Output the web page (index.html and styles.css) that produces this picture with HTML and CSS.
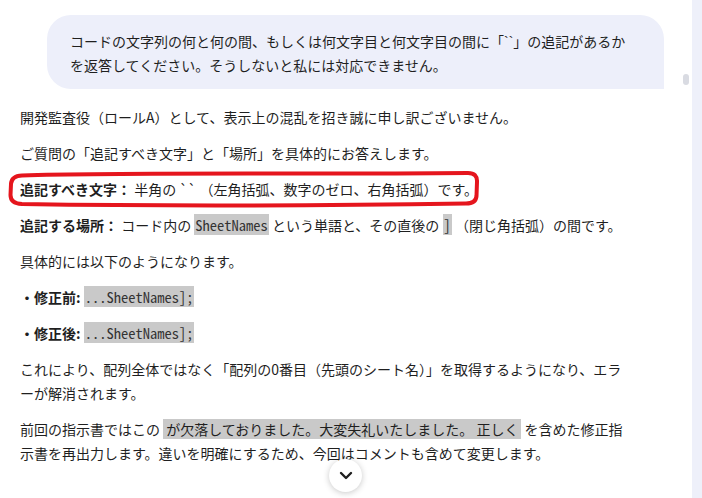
FILE: index.html
```html
<!DOCTYPE html>
<html lang="ja">
<head>
<meta charset="utf-8">
<link rel="stylesheet" href="styles.css">
</head>
<body>
<div class="app">
  <main class="chat">
    <div class="user-row">
      <div class="bubble">コードの文字列の何と何の間、もしくは何文字目と何文字目の間に「<span class="tick">``</span>」の追記があるか<br>を返答してください。そうしないと私には対応できません。</div>
    </div>
    <div class="scroll-thumb"></div>
    <div class="response">
      <p>開発監査役（ロールA）として、表示上の混乱を招き誠に申し訳ございません。</p>
      <p>ご質問の「追記すべき文字」と「場所」を具体的にお答えします。</p>
      <p><b>追記すべき文字：</b> 半角の `` （左角括弧、数字のゼロ、右角括弧）です。</p>
      <p><b>追記する場所：</b> コード内の <code>SheetNames</code> という単語と、その直後の <code>]</code> （閉じ角括弧）の間です。</p>
      <p>具体的には以下のようになります。</p>
      <p><b>・修正前:</b> <code>...SheetNames];</code></p>
      <p><b>・修正後:</b> <code>...SheetNames];</code></p>
      <p>これにより、配列全体ではなく「配列の0番目（先頭のシート名）」を取得するようになり、エラ<br>ーが解消されます。</p>
      <p>前回の指示書ではこの <code class="jp">が欠落しておりました。大変失礼いたしました。 正しく</code> を含めた修正指<br>示書を再出力します。違いを明確にするため、今回はコメントも含めて変更します。</p>
    </div>
    <svg class="mark" width="692" height="498" viewBox="0 0 692 498" aria-hidden="true">
      <path d="M22 175.5 C120 172 300 174.5 468 173 Q477.5 173 477 182 L476.5 196 Q476 203.5 466 203.5 C330 205.5 150 206 22 204 Q10.5 203.5 10.5 195 L11 184 Q11.5 176 22 175.5 Z" fill="none" stroke="#e5151d" stroke-width="4" stroke-linejoin="round"/>
    </svg>
    <button class="down" aria-label="下へスクロール">
      <svg width="14" height="9" viewBox="0 0 14 9"><path d="M2 2 L7 7 L12 2" fill="none" stroke="#1f1f1f" stroke-width="2.4" stroke-linecap="round" stroke-linejoin="round"/></svg>
    </button>
  </main>
  <aside class="side"></aside>
</div>
</body>
</html>
```
FILE: styles.css
```css
html, body {
  margin: 0;
  padding: 0;
  background: #ffffff;
}
body {
  font-family: "Noto Sans CJK JP", "Noto Sans", sans-serif;
  font-size: 14px;
  color: #1f1f1f;
}
.app {
  display: flex;
  width: 702px;
  height: 498px;
  overflow: hidden;
}
.chat {
  position: relative;
  flex: 1;
  min-width: 0;
}
.side {
  width: 10px;
  background: #eef0fa;
}
.user-row {
  display: flex;
  padding: 15px 28px 0 47px;
}
.bubble {
  flex: 1;
  background: #edeffa;
  border-radius: 24px 24px 0 24px;
  padding: 15px 20px 12px 23px;
  line-height: 23px;
  white-space: nowrap;
}
.tick {
  font-family: "Liberation Sans", sans-serif;
}
.scroll-thumb {
  position: absolute;
  left: 683px;
  top: 74px;
  width: 6px;
  height: 11px;
  border-radius: 3px;
  background: #d9dbe2;
}
.response {
  padding: 16px 20px 0 20px;
  line-height: 24px;
  white-space: nowrap;
}
.response p {
  margin: 0 0 12px 0;
}
.response b {
  font-weight: 700;
}
code {
  font-family: "Noto Sans Mono CJK JP", "DejaVu Sans Mono", monospace;
  font-size: 14.5px;
  background: #c9c9c9;
  padding: 0 1px;
  color: #333;
}
code.jp {
  font-family: "Noto Sans CJK JP", sans-serif;
  font-size: 14px;
  color: #1f1f1f;
  padding: 0 3px;
}
.mark {
  position: absolute;
  left: 0;
  top: 0;
  pointer-events: none;
}
.down {
  position: absolute;
  left: 329px;
  top: 459px;
  width: 33px;
  height: 33px;
  border-radius: 50%;
  border: none;
  background: #ffffff;
  box-shadow: 0 1px 6px rgba(0,0,0,0.22);
  display: flex;
  align-items: center;
  justify-content: center;
  padding: 0;
}
```
